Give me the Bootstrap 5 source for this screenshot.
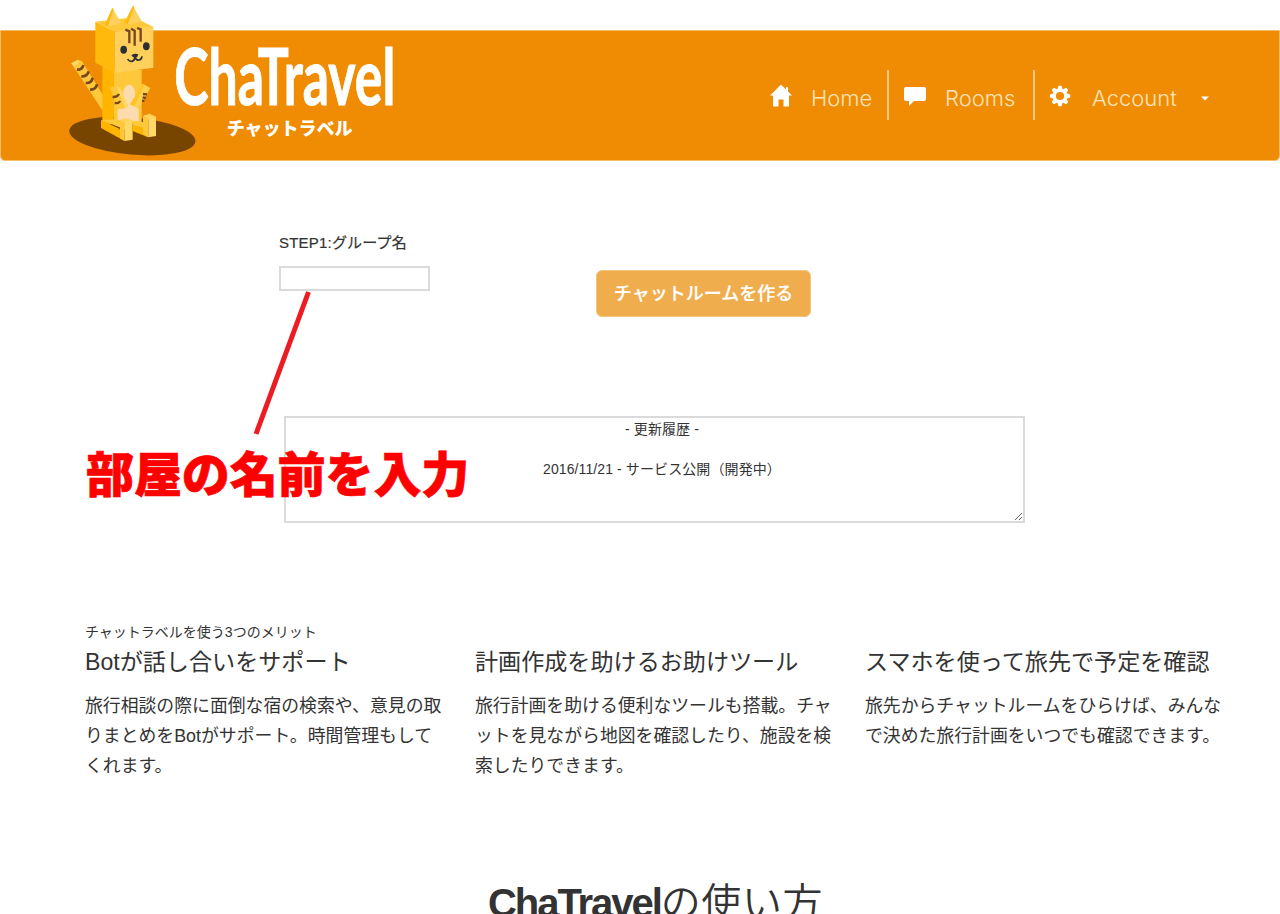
<!DOCTYPE html>
<html lang="ja">
<head>
<meta charset="utf-8">
<meta name="viewport" content="width=device-width, initial-scale=1">
<title>ChaTravel</title>
<link rel="stylesheet" href="https://cdn.jsdelivr.net/npm/bootstrap@5.3.0/dist/css/bootstrap.min.css">
<style>
body{font-family:"Liberation Sans","Noto Sans CJK JP",sans-serif;color:#333;height:914px;overflow:hidden;font-size:14px;line-height:20px}
.topbar{margin-top:30px;height:131px;background:#ef8c03;border:1px solid #f8bd69;border-radius:0 0 5px 5px;padding:0 68px}
.brand-art{width:350px;height:160px;margin-top:-31px;margin-left:-9px;display:block;flex:none}
.menu{margin-top:39px;margin-right:-1px}
.menu .nav-link{height:50px;padding:0 0 0 15px;color:#ffe3bd;font:300 22px/56px Inter,sans-serif;display:flex;align-items:flex-start}
.menu .nav-link svg{flex:none;fill:#fff}
.menu .ruled{border-right:2px solid #f8c67f}
.nav-label{white-space:nowrap}
.form-area{margin-top:70px;padding-left:279px;height:185px}
.step{width:317px}
.step label{font-size:15px;line-height:24px;display:block;margin-bottom:11px;letter-spacing:.2px;-webkit-text-stroke:.2px #333}
.step input{display:block;width:151px;height:25px;border:2px solid #dadada;border-radius:0;background:#fff}
.make{margin-top:39px;width:215px;height:47px;background:#f0ad4e;border:1px solid #f6c47c;border-radius:6px;color:#fff;font-size:18px;line-height:24px;font-weight:500;padding:0;-webkit-text-stroke:.2px #fff}
.history{display:block;margin-left:284px;width:741px;height:107px;border:2px solid #dadada;border-radius:0;padding:1px 2px 2px 17px;text-align:center;color:#333;font-size:14px;line-height:20px;letter-spacing:.1px;resize:both;overflow:hidden;outline:0}
.merits{margin:99px 40px 0 70px}
.merits .col-4{padding:0 15px}
.merits h3{font-size:23.1px;line-height:28px;font-weight:400;margin:6px 0 15px;white-space:nowrap}
.merits p{font-size:17.85px;line-height:30px;margin:0;white-space:nowrap}
.merit-note{height:20px;white-space:nowrap}
.howto{font-size:40px;line-height:44px;margin:97px 0 0 488px;font-weight:400;white-space:nowrap}
.howto b{letter-spacing:-2.05px}
.howto span{font-family:"Noto Sans CJK JP",sans-serif;font-weight:350;letter-spacing:.6px}
.note-line{left:240px;top:280px}
.note-text{left:86px;top:443px;font:900 48px/56px "Noto Sans CJK JP",sans-serif;color:#f00;letter-spacing:-.1px;-webkit-text-stroke:.7px #f00;white-space:nowrap}
</style>
</head>
<body class="position-relative">
<nav class="topbar d-flex justify-content-between align-items-start">
<a href="#" class="d-block" aria-label="ChaTravel">
<svg class="brand-art" viewBox="0 0 1050 480">
<ellipse cx="217" cy="408" rx="190" ry="56" fill="#784500" transform="rotate(5 217 408)"/>
<!-- tail -->
<path d="M34 190L54 179 66 184 132 290 129 334Z" fill="#ffc83a"/><path d="M34 190L54 179 58 187 43 200Z" fill="#ffd868"/>
<g fill="none" stroke="#784621" stroke-width="8"><path d="M51 209q16 1 19-14M64 229q18 1 22-15M77 249q18 1 21-16M90 269q18 1 21-16"/></g>
<!-- body and legs -->
<path d="M127 196L161 210 161 370 123 384 127 360Z" fill="#ffb400"/>
<path d="M161 210H245V370H161Z" fill="#ffc83a"/>
<path d="M173 360V330L187 320 190 275Q194 255 207 254T225 276L227 315 236 326V365Z" fill="#fcdcae"/>
<path d="M123 360L178 386 194 423 123 384Z" fill="#ffb400"/><path d="M123 360L170 358 218 382 194 388Z" fill="#ffc83a"/>
<path d="M180 360L198 354 218 362 194 370Z" fill="#ffd25a"/><path d="M180 360L194 369V423L180 415Z" fill="#ffc83a"/><path d="M194 368L218 361V419L194 423Z" fill="#ffd868"/>
<path d="M218 367L264 386V412L218 393Z" fill="#ffb400"/><path d="M218 362L248 366 264 387 218 374Z" fill="#ffc83a"/>
<path d="M249 347L269 341 288 350 265 358Z" fill="#ffd25a"/><path d="M249 347L265 357V412L249 402Z" fill="#ffc83a"/><path d="M265 356L288 350V408L265 412Z" fill="#ffd868"/>
<!-- arms -->
<path d="M150 263L169 257 182 268 205 320 183 328 169 313Z" fill="#ffc83a"/><path d="M169 257L182 266 205 320 195 322Z" fill="#ffd868"/>
<path d="M248 251L271 264 236 326 210 313Z" fill="#ffd04d"/><path d="M248 251L210 313 223 319 254 254Z" fill="#ffc325"/>
<g fill="none" stroke="#784621" stroke-width="7"><path d="M158 291q14 1 19-9M164 309q12 2 17-6M249 282l12 1M248 292l10 2M246 302l7 1"/></g>
<!-- head -->
<path d="M106 65L164 95V219L106 188Z" fill="#ffb80c"/><path d="M106 65L223 52 280 81 164 95Z" fill="#ffc83a"/>
<path d="M164 95L280 79V203L164 219Z" fill="#ffd05c"/>
<path d="M133 77L157 24 184 69Q160 80 133 77Z" fill="#ffd05c"/><path d="M133 77L157 24 161 28 144 78Z" fill="#ffb80c"/>
<path d="M193 69L219 17 245 64Q222 77 193 69Z" fill="#ffd05c"/><path d="M193 69L219 17 223 22 203 72Z" fill="#ffb80c"/>
<g fill="none" stroke="#784621" stroke-width="7"><path d="M196 89l12 5v36M213 86l11 6v45M231 84l11 4v37"/></g>
<ellipse cx="191" cy="149" rx="10" ry="12" fill="#2c3033"/><ellipse cx="259" cy="139" rx="10" ry="12" fill="#2c3033"/>
<path d="M214 166q10-7 21-3-1 8-9 11-9-1-12-8Z" fill="#2c3033"/><path d="M203 177q4 9 13 7 8-2 9-13 3 11 12 9 8-1 9-11" fill="none" stroke="#2c3033" stroke-width="5"/>
<text x="343" y="316" textLength="663" lengthAdjust="spacingAndGlyphs" font-family="Lato,sans-serif" font-weight="700" font-size="236" fill="#fff" stroke="#fff" stroke-width="3">ChaTravel</text>
<text x="500" y="405" textLength="378" lengthAdjust="spacingAndGlyphs" font-family="Noto Sans CJK JP,sans-serif" font-weight="900" font-size="54" fill="#fff">チャットラベル</text>
</svg></a>
<div class="menu nav flex-nowrap">
<a class="nav-link ruled" href="#" style="width:135px"><svg width="24" height="40" viewBox="0 0 24 40"><path d="M12 14.500L1 25.500H4V36.500H9.500V29.500H14.500V36.500H20V25.500H23L19 21.500V17H17V19.500Z"/></svg><span class="nav-label" style="margin-left:18px">Home</span></a>
<a class="nav-link ruled" href="#" style="width:146px"><svg width="23" height="40" viewBox="0 0 23 40"><path d="M2 17H20Q22 17 22 19V29Q22 31 20 31H10L5 36V31H2Q0 31 0 29V19Q0 17 2 17Z"/></svg><span class="nav-label" style="margin-left:18px">Rooms</span></a>
<a class="nav-link" href="#" style="width:177px"><svg width="22" height="40" viewBox="0 0 22 40"><g transform="translate(10 26)"><circle r="5.800" fill="none" stroke="#fff" stroke-width="3.400"/><path id="tooth" d="M-2.500-7L-1.500-10.200H1.500L2.500-7Z"/><use href="#tooth" transform="rotate(45)"/><use href="#tooth" transform="rotate(90)"/><use href="#tooth" transform="rotate(135)"/><use href="#tooth" transform="rotate(180)"/><use href="#tooth" transform="rotate(225)"/><use href="#tooth" transform="rotate(270)"/><use href="#tooth" transform="rotate(315)"/></g></svg><span class="nav-label" style="margin-left:20px">Account</span><svg class="ms-auto me-0" width="11" height="40" viewBox="0 0 11 40"><path d="M0 26.500H8L4 30.500Z"/></svg></a>
</div>
</nav>
<main>
<form class="form-area d-flex align-items-start">
<div class="step"><label for="group">STEP1:グループ名</label><input id="group" type="text"></div>
<button type="button" class="btn make">チャットルームを作る</button>
</form>
<textarea class="history" readonly aria-label="更新履歴">- 更新履歴 -

2016/11/21 - サービス公開（開発中）</textarea>
<section class="merits row gx-0">
<div class="col-4"><div class="merit-note">チャットラベルを使う3つのメリット</div><h3>Botが話し合いをサポート</h3><p>旅行相談の際に面倒な宿の検索や、意見の取<br>りまとめをBotがサポート。時間管理もして<br>くれます。</p></div>
<div class="col-4"><div class="merit-note"></div><h3>計画作成を助けるお助けツール</h3><p>旅行計画を助ける便利なツールも搭載。チャ<br>ットを見ながら地図を確認したり、施設を検<br>索したりできます。</p></div>
<div class="col-4"><div class="merit-note"></div><h3>スマホを使って旅先で予定を確認</h3><p>旅先からチャットルームをひらけば、みんな<br>で決めた旅行計画をいつでも確認できます。</p></div>
</section>
<h1 class="howto"><b>ChaTravel</b><span>の使い方</span></h1>
</main>
<svg class="note-line position-absolute" width="80" height="160" viewBox="0 0 80 160"><path d="M68.500 12L16 154" stroke="#ed1c24" stroke-width="5"/></svg>
<div class="note-text position-absolute">部屋の名前を入力</div>
<script src="https://cdn.jsdelivr.net/npm/bootstrap@5.3.0/dist/js/bootstrap.bundle.min.js"></script>
</body>
</html>
